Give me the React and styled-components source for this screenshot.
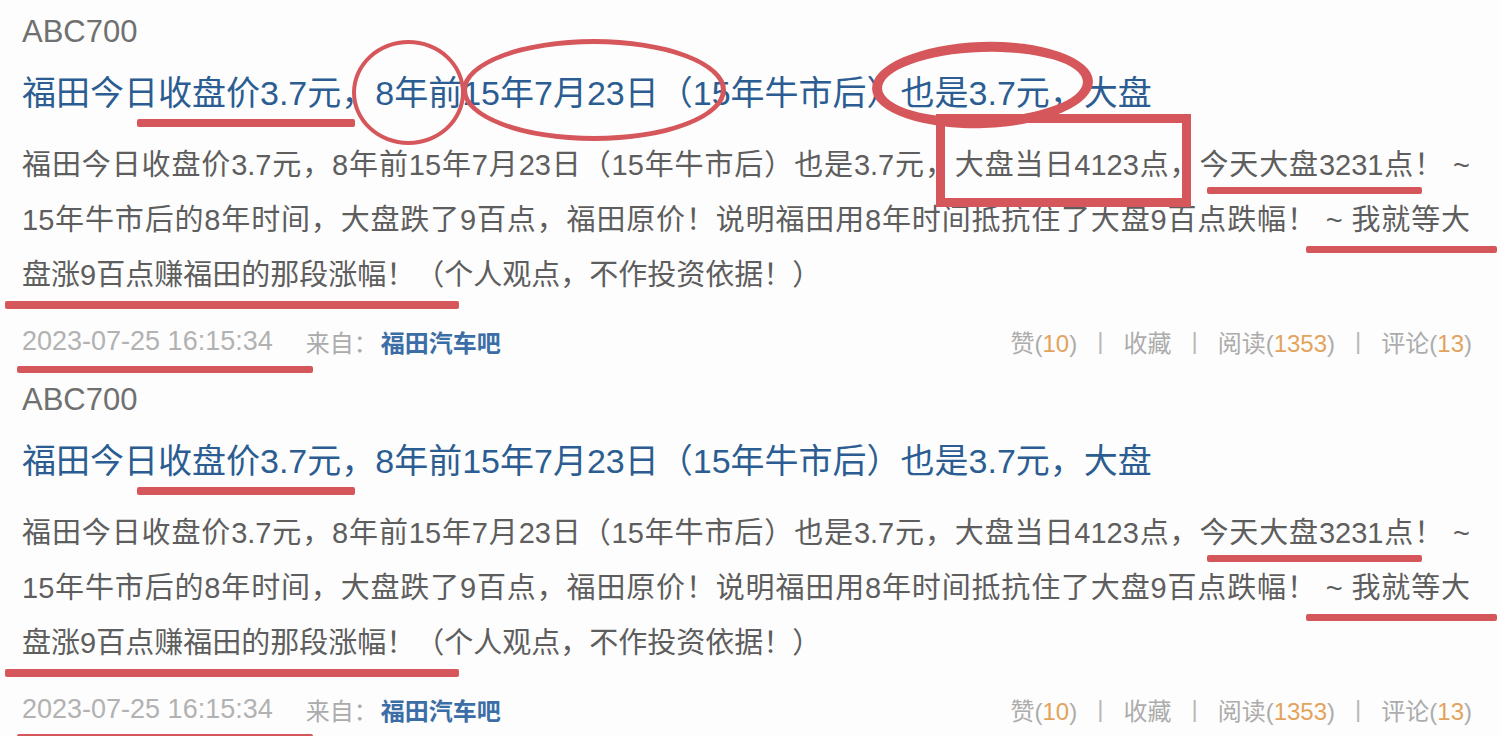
import React from 'react';
import styled, { createGlobalStyle } from 'styled-components';

const GlobalStyle = createGlobalStyle`
    html, body {
        margin: 0;
        padding: 0;
        background: #fdfdfd;
    }
    body {
        font-family: "Liberation Sans", "Noto Sans CJK SC", sans-serif;
        overflow: hidden;
    }
`;

const Page = styled.div`
    width: 1500px;
    height: 736px;
    overflow: hidden;
    background: #fdfdfd;
`;

const Post = styled.div`
    position: relative;
    height: 368px;
    box-sizing: border-box;
    padding: 12px 28px 0 22px;
    display: flex;
    flex-direction: column;
`;

const Author = styled.div`
    font-size: 31px;
    line-height: 40px;
    color: #707070;
`;

const Title = styled.div`
    margin-top: 19px;
    font-size: 34px;
    line-height: 44px;
    color: #2c5d92;
    white-space: nowrap;
`;

const Body = styled.div`
    margin-top: 23px;
    font-size: 29px;
    line-height: 55px;
    color: #5e5e5e;
    width: 1448px;
`;

const BodyLine = styled.div`
    white-space: nowrap;
    text-align: ${p => (p.$justify ? 'justify' : 'left')};
    text-align-last: ${p => (p.$justify ? 'justify' : 'left')};
`;

const Footer = styled.div`
    margin-top: 18px;
    height: 40px;
    display: flex;
    align-items: center;
    justify-content: space-between;
`;

const Meta = styled.div`
    display: flex;
    align-items: center;
`;

const Time = styled.span`
    font-size: 27px;
    color: #b2b2b2;
`;

const From = styled.span`
    margin-left: 33px;
    font-size: 24px;
    color: #ababab;
`;

const Source = styled.span`
    margin-left: 3px;
    font-size: 24px;
    font-weight: 700;
    color: #3b6ea6;
`;

const Stats = styled.div`
    display: flex;
    align-items: center;
    font-size: 24px;
    color: #acacac;
`;

const Count = styled.span`
    color: #e2a35c;
`;

const Sep = styled.span`
    margin: 0 20px;
    color: #b8b8b8;
`;

/* red pen marks drawn over the text */
const Stroke = styled.div`
    position: absolute;
    left: ${p => p.$x}px;
    top: ${p => p.$y}px;
    width: ${p => p.$w}px;
    height: ${p => p.$h || 7}px;
    background: #d6575b;
    border-radius: 2px;
`;

const Ring = styled.div`
    position: absolute;
    left: ${p => p.$x}px;
    top: ${p => p.$y}px;
    width: ${p => p.$w}px;
    height: ${p => p.$h}px;
    box-sizing: border-box;
    border: ${p => p.$t}px solid #d6575b;
    border-radius: 50%;
    transform: rotate(${p => p.$r || 0}deg);
`;

const Frame = styled.div`
    position: absolute;
    left: ${p => p.$x}px;
    top: ${p => p.$y}px;
    width: ${p => p.$w}px;
    height: ${p => p.$h}px;
    box-sizing: border-box;
    border: 9px solid #d6575b;
`;

const lines = [
    '福田今日收盘价3.7元，8年前15年7月23日（15年牛市后）也是3.7元，大盘当日4123点，今天大盘3231点！ ~',
    '15年牛市后的8年时间，大盘跌了9百点，福田原价！说明福田用8年时间抵抗住了大盘9百点跌幅！ ~ 我就等大',
    '盘涨9百点赚福田的那段涨幅！（个人观点，不作投资依据！）',
];

const PostItem = ({ circled }) => (
    <Post>
        <Author>ABC700</Author>
        <Title>福田今日收盘价3.7元，8年前15年7月23日（15年牛市后）也是3.7元，大盘</Title>
        <Body>
            {lines.map((line, i) => (
                <BodyLine key={i} $justify={i < 2}>{line}</BodyLine>
            ))}
        </Body>
        <Footer>
            <Meta>
                <Time>2023-07-25 16:15:34</Time>
                <From>来自：</From>
                <Source>福田汽车吧</Source>
            </Meta>
            <Stats>
                <span>赞(<Count>10</Count>)</span>
                <Sep>|</Sep>
                <span>收藏</span>
                <Sep>|</Sep>
                <span>阅读(<Count>1353</Count>)</span>
                <Sep>|</Sep>
                <span>评论(<Count>13</Count>)</span>
            </Stats>
        </Footer>

        <Stroke $x={137} $y={119} $w={218} $h={8} />
        <Stroke $x={1207} $y={187} $w={215} />
        <Stroke $x={1306} $y={246} $w={191} />
        <Stroke $x={5} $y={301} $w={454} $h={8} />
        <Stroke $x={17} $y={366} $w={296} />
        {circled && (
            <>
                <Ring $x={352} $y={40} $w={113} $h={105} $t={4} />
                <Ring $x={462} $y={39} $w={264} $h={102} $t={5} />
                <Ring $x={872} $y={42} $w={221} $h={86} $t={10} $r={-2} />
                <Frame $x={936} $y={114} $w={255} $h={93} />
            </>
        )}
    </Post>
);

export default function App() {
    return (
        <Page>
            <GlobalStyle />
            <PostItem circled />
            <PostItem />
        </Page>
    );
}
